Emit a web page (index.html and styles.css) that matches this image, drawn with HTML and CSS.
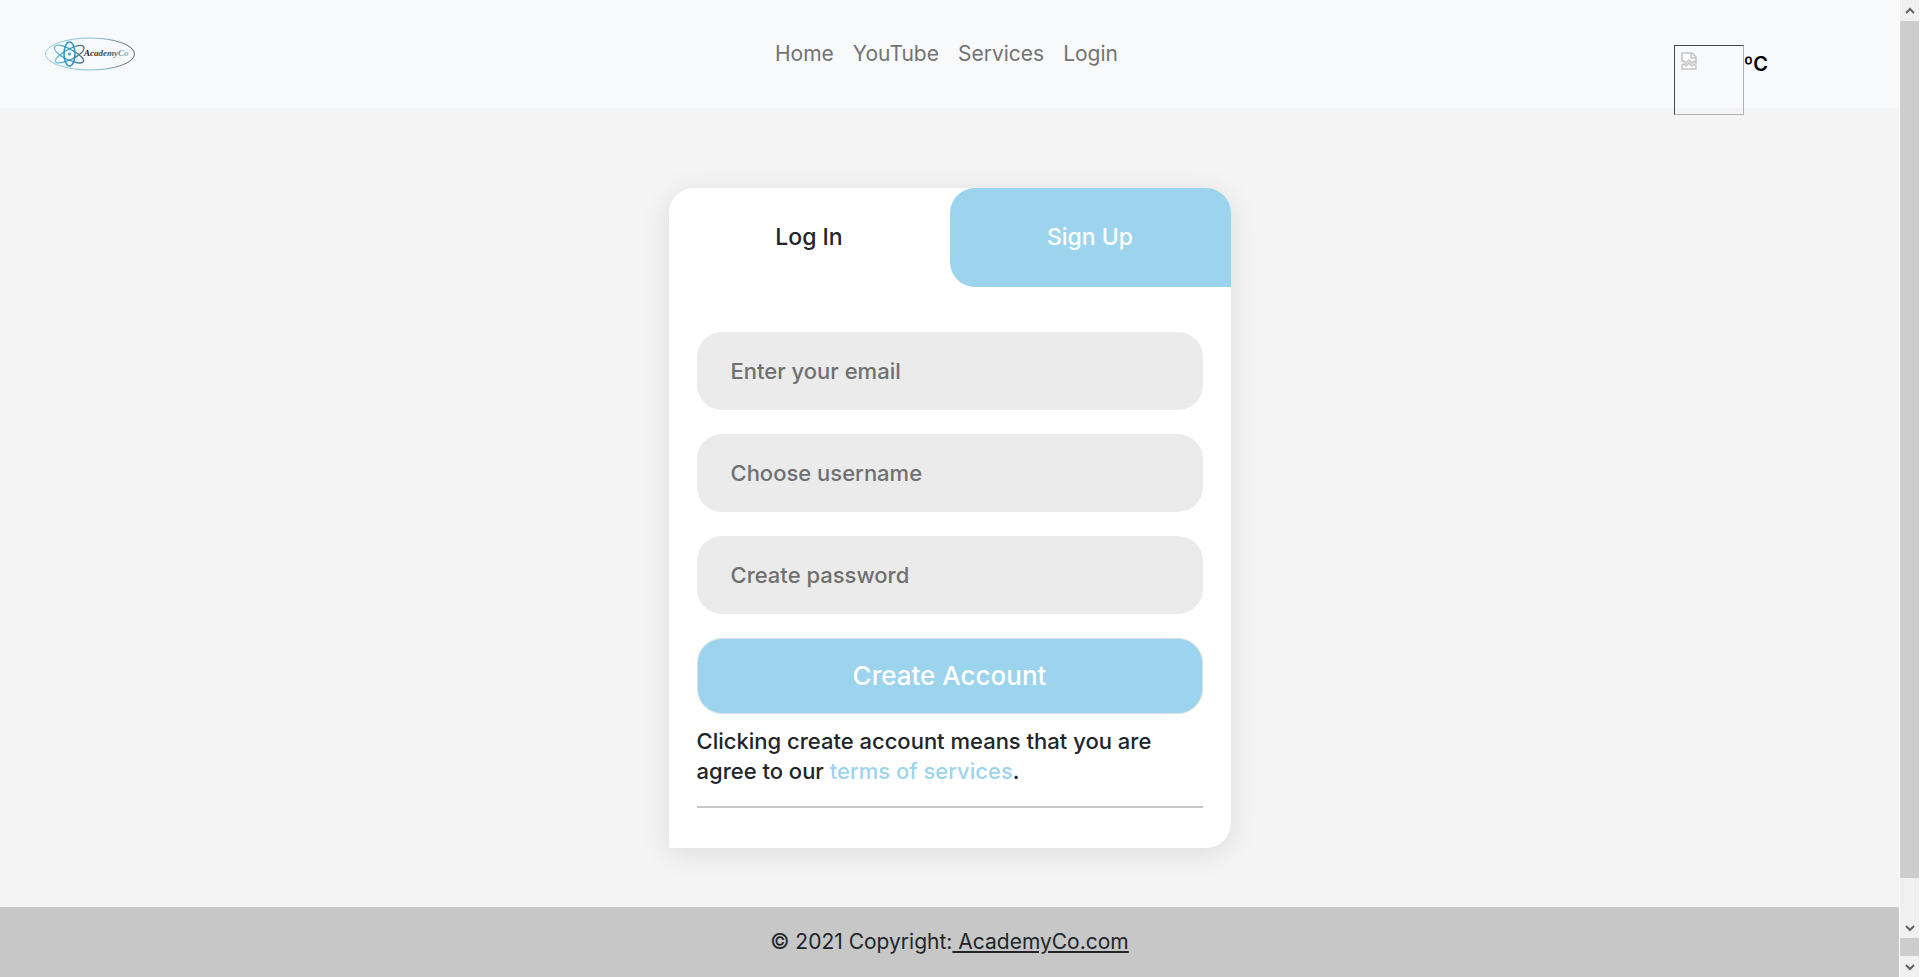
FILE: index.html
```html
<!DOCTYPE html>
<html lang="en">
<head>
<meta charset="utf-8">
<meta name="viewport" content="width=device-width, initial-scale=1">
<title>AcademyCo</title>
<link rel="stylesheet" href="styles.css">
</head>
<body>
<div class="page">
  <header class="header">
    <a class="brand" href="#" aria-label="AcademyCo">
      <svg class="logo" width="92" height="34" viewBox="0 0 92 34">
        <defs>
          <linearGradient id="ring" gradientUnits="userSpaceOnUse" x1="0" y1="0" x2="92" y2="0">
            <stop offset="0" stop-color="#8fcfe8"/><stop offset=".6" stop-color="#82bcd3"/><stop offset=".85" stop-color="#6b7880"/><stop offset="1" stop-color="#63676b"/>
          </linearGradient>
          <linearGradient id="orbit" gradientUnits="userSpaceOnUse" x1="9" y1="0" x2="41" y2="0">
            <stop offset="0" stop-color="#7cc9e6"/><stop offset=".5" stop-color="#2f97c4"/><stop offset="1" stop-color="#5b6a73"/>
          </linearGradient>
          <linearGradient id="word" gradientUnits="userSpaceOnUse" x1="40" y1="0" x2="87" y2="0">
            <stop offset="0" stop-color="#101214"/><stop offset=".35" stop-color="#4c4e52"/><stop offset=".65" stop-color="#46687c"/><stop offset="1" stop-color="#9fd6ec"/>
          </linearGradient>
        </defs>
        <ellipse cx="46" cy="17" rx="44.5" ry="16" fill="none" stroke="url(#ring)"/>
        <g fill="none" stroke="url(#orbit)" stroke-width="1.300">
          <path d="M39.5 9.500C42 13 35.500 18.500 28 22S12.500 27.500 11.500 24.500 18 15.500 25 12 37.500 7 39.500 9.500Z"/>
          <path d="M11 9.500C8.500 13 15 18.500 22.500 22S38 27.500 39.500 24.500 33 15.500 26 12 13 7 11 9.500Z"/>
        </g>
        <ellipse cx="25.500" cy="17" rx="5.500" ry="12" fill="none" stroke="#2f97c4" stroke-width="1.600"/>
        <circle cx="25.500" cy="17" r="1.600" fill="#45a6d0"/>
        <text class="logo-text" x="40" y="19" fill="url(#word)">AcademyCo</text>
      </svg>
    </a>
    <nav class="nav" aria-label="Main">
      <a href="#">Home</a>
      <a href="#">YouTube</a>
      <a href="#">Services</a>
      <a href="#">Login</a>
    </nav>
    <div class="weather">
      <div class="weather-icon">
        <svg width="16" height="18" viewBox="0 0 16 18" fill="#fff" stroke="#c4c4c4" stroke-width="1.500">
          <path d="M1 9V1h10l4 4v6l-2-2-2 2-3-3-3 3-2-2zM10 1v5h5"/>
          <path d="M1 17v-4l2-1 2 2 3-3 3 3 2-2 2 2v3z"/>
        </svg>
      </div>
      <span class="weather-temp">ºC</span>
    </div>
  </header>

  <main class="main">
    <section class="card">
      <div class="tabs">
        <button class="tab" type="button">Log In</button>
        <button class="tab tab-active" type="button">Sign Up</button>
      </div>
      <form class="form">
        <input class="field" type="email" placeholder="Enter your email" aria-label="Enter your email">
        <input class="field" type="text" placeholder="Choose username" aria-label="Choose username">
        <input class="field" type="password" placeholder="Create password" aria-label="Create password">
        <button class="submit" type="button">Create Account</button>
        <p class="terms">Clicking create account means that you are agree to our <a href="#">terms of services</a>.</p>
        <hr class="rule">
      </form>
    </section>
  </main>

  <footer class="footer">© 2021 Copyright:<a href="#"> AcademyCo.com</a></footer>
</div>

<div class="scroll" aria-hidden="true">
  <div class="scroll-end"><svg width="10" height="8" viewBox="0 0 10 8"><path d="M1 6l4-4 4 4"/></svg></div>
  <div class="thumb thumb-main"></div>
  <div class="track"></div>
  <div class="scroll-end"><svg width="10" height="8" viewBox="0 0 10 8"><path d="M1 2l4 4 4-4"/></svg></div>
  <div class="thumb thumb-small"></div>
  <div class="scroll-end"><svg width="10" height="8" viewBox="0 0 10 8"><path d="M1 2l4 4 4-4"/></svg></div>
</div>
</body>
</html>
```
FILE: styles.css
```css
* {
  box-sizing: border-box;
}

body {
  display: flex;
  min-height: 100vh;
  margin: 0;
  background: #f4f4f4;
  color: #212529;
  font-family: Inter, "Liberation Sans", sans-serif;
  font-size: 21px;
  line-height: 30px;
}

button,
input {
  font: inherit;
}

.page {
  display: flex;
  flex: 1;
  flex-direction: column;
  min-width: 0;
}

.header {
  display: grid;
  grid-template-columns: 1fr auto 1fr;
  align-items: center;
  min-height: 108px;
  background: #f8f9fb;
}

.brand {
  justify-self: start;
  margin-left: 44px;
}

.logo {
  display: block;
}

.logo-text {
  font: italic bold 9px "Liberation Serif", serif;
}

.nav {
  display: flex;
  gap: 19px;
  margin-right: 6px;
}

.nav a {
  color: #727373;
  text-decoration: none;
}

.weather {
  display: flex;
  align-self: start;
  justify-self: end;
  margin: 45px 131px -7px 0;
}

.weather-icon {
  width: 70px;
  height: 70px;
  padding: 6px;
  border: 1px solid;
  border-color: #45484c #b2b2b4 #b2b2b4 #45484c;
}

.weather-icon svg {
  display: block;
}

.weather-temp {
  padding-top: 4px;
  color: #000;
  font-size: 20px;
  font-weight: 600;
}

.main {
  flex: 1;
  padding: 80px 24px 59px;
}

.card {
  max-width: 562px;
  margin: 0 auto;
  border-radius: 25px 25px 25px 0;
  background: #fff;
  box-shadow: 0 5px 30px rgba(0, 0, 0, 0.1);
}

.tabs {
  display: grid;
  grid-template-columns: 1fr 1fr;
}

.tab {
  padding: 34px 16px 35px;
  border: 0;
  border-radius: 25px 25px 0 25px;
  background: #fff;
  color: #212529;
  font-size: 23px;
  font-weight: 500;
}

.tab-active {
  background: #9dd4ed;
  color: #fff;
}

.form {
  display: flex;
  flex-direction: column;
  gap: 24px;
  padding: 45px 28px 40px;
}

.field {
  width: 100%;
  padding: 24px 34px;
  border: 0;
  border-radius: 25px;
  background: #ebebeb;
  color: #212529;
  font-size: 22px;
  font-weight: 500;
}

.field::placeholder {
  color: #707070;
  opacity: 1;
}

.submit {
  padding: 22px 16px;
  border: 1px solid #d9e2e7;
  border-radius: 25px;
  background: #9dd4ed;
  color: #fff;
  font-size: 26px;
  font-weight: 500;
}

.terms {
  margin: -12px 0 -4px;
  font-size: 22px;
  font-weight: 500;
}

.terms a {
  color: #9dd4ed;
  text-decoration: none;
}

.rule {
  width: 100%;
  height: 2px;
  margin: 0;
  border: 0;
  background: #c7c7c7;
}

.footer {
  padding: 20px;
  background: #c7c7c7;
  text-align: center;
}

.footer a {
  color: inherit;
}

.scroll {
  display: flex;
  flex-direction: column;
  width: 21px;
  border: solid #fff;
  border-width: 0 1px;
  background: #f0f0f0;
}

.scroll-end {
  display: flex;
  flex: 0 0 21px;
  align-items: center;
  justify-content: center;
}

.scroll-end svg {
  fill: none;
  stroke: #606060;
  stroke-width: 2;
}

.thumb {
  background: #cdcdcd;
}

.thumb-main {
  flex: 22;
}

.thumb-small {
  flex: 0 0 18px;
}

.track {
  flex: 1;
}
```
